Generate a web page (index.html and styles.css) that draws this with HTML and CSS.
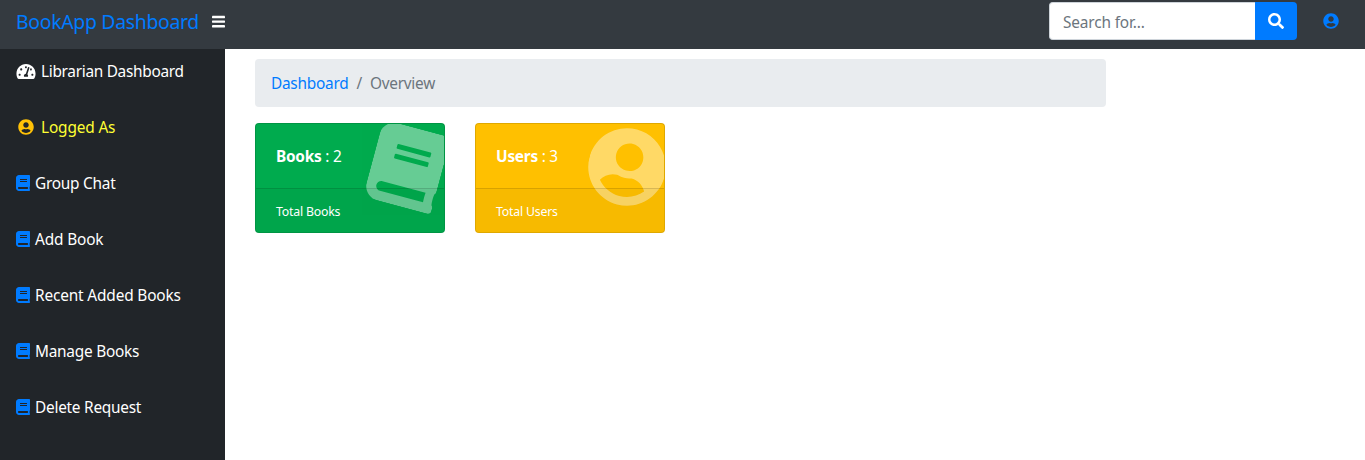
FILE: index.html
```html
<!DOCTYPE html>
<html lang="en">
<head>
<meta charset="utf-8">
<title>BookApp Dashboard</title>
<link rel="stylesheet" href="styles.css">
</head>
<body>
<svg class="sprite" aria-hidden="true">
  <symbol id="book" viewBox="0 0 448 512"><path d="M448 360V24c0-13.3-10.7-24-24-24H96C43 0 0 43 0 96v320c0 53 43 96 96 96h328c13.3 0 24-10.7 24-24v-16c0-7.5-3.5-14.3-8.9-18.7-4.2-15.4-4.2-59.3 0-74.7 5.4-4.3 8.9-11.1 8.9-18.6zM128 134c0-3.3 2.7-6 6-6h212c3.3 0 6 2.7 6 6v20c0 3.3-2.7 6-6 6H134c-3.3 0-6-2.7-6-6v-20zm0 64c0-3.3 2.7-6 6-6h212c3.3 0 6 2.7 6 6v20c0 3.3-2.7 6-6 6H134c-3.3 0-6-2.7-6-6v-20zm253.4 250H96c-17.7 0-32-14.3-32-32 0-17.6 14.4-32 32-32h285.4c-1.9 17.1-1.9 46.9 0 64z"/></symbol>
  <symbol id="user" viewBox="0 0 496 512"><path d="M248 8C111 8 0 119 0 256s111 248 248 248 248-111 248-248S385 8 248 8zm0 96c48.6 0 88 39.4 88 88s-39.4 88-88 88-88-39.4-88-88 39.4-88 88-88zm0 344c-58.7 0-111.3-26.6-146.5-68.2 18.8-35.4 55.6-59.8 98.5-59.8 2.4 0 4.8.4 7.1 1.1 13 4.2 26.6 6.9 40.9 6.9 14.3 0 28-2.7 40.9-6.9 2.3-.7 4.7-1.1 7.1-1.1 42.9 0 79.7 24.4 98.5 59.8C359.3 421.4 306.7 448 248 448z"/></symbol>
  <symbol id="search" viewBox="0 0 512 512"><path d="M505 442.7L405.3 343c-4.5-4.5-10.6-7-17-7H372c27.6-35.3 44-79.7 44-128C416 93.1 322.9 0 208 0S0 93.1 0 208s93.1 208 208 208c48.3 0 92.7-16.4 128-44v16.3c0 6.4 2.5 12.5 7 17l99.7 99.7c9.4 9.4 24.6 9.4 33.9 0l28.3-28.3c9.4-9.4 9.4-24.6.1-34zM208 336c-70.7 0-128-57.2-128-128 0-70.7 57.2-128 128-128 70.7 0 128 57.2 128 128 0 70.7-57.2 128-128 128z"/></symbol>
  <symbol id="gauge" viewBox="0 0 576 512"><path d="M288 32C128.94 32 0 160.94 0 320c0 52.8 14.25 102.26 39.06 144.8 5.61 9.62 16.3 15.2 27.44 15.2h443c11.14 0 21.83-5.58 27.44-15.2C561.75 422.26 576 372.8 576 320c0-159.06-128.94-288-288-288zm0 64c14.71 0 26.58 10.13 30.32 23.65-1.11 2.26-2.64 4.23-3.45 6.67l-9.22 27.67c-5.13 3.49-10.97 6.01-17.64 6.01-17.67 0-32-14.33-32-32S270.33 96 288 96zM96 384c-17.67 0-32-14.33-32-32s14.33-32 32-32 32 14.33 32 32-14.33 32-32 32zm48-160c-17.67 0-32-14.33-32-32s14.33-32 32-32 32 14.33 32 32-14.33 32-32 32zm246.77-72.41l-61.33 184C343.13 347.33 352 364.54 352 384c0 11.72-3.38 22.55-8.88 32H232.88c-5.5-9.45-8.88-20.28-8.88-32 0-33.94 26.5-61.43 59.9-63.59l61.34-184.01c4.17-12.56 17.73-19.45 30.36-15.17 12.57 4.19 19.35 17.79 15.17 30.36zm14.66 57.2l15.52-46.55c3.47-1.29 7.13-2.23 11.05-2.23 17.67 0 32 14.33 32 32s-14.33 32-32 32c-11.38-.01-20.89-6.28-26.57-15.22zM480 384c-17.67 0-32-14.33-32-32s14.33-32 32-32 32 14.33 32 32-14.33 32-32 32z"/></symbol>
  <symbol id="bars" viewBox="0 0 448 512"><rect x="0" y="60" width="448" height="80" rx="16"/><rect x="0" y="220" width="448" height="80" rx="16"/><rect x="0" y="380" width="448" height="80" rx="16"/></symbol>
</svg>
<header class="navbar">
  <a class="brand">BookApp Dashboard</a>
  <svg class="icon bars"><use href="#bars"/></svg>
  <form class="search">
    <input class="search-input" type="text" placeholder="Search for...">
    <button class="search-button" type="button" aria-label="Search"><svg class="icon"><use href="#search"/></svg></button>
  </form>
  <a class="account"><svg class="icon"><use href="#user"/></svg></a>
</header>
<div class="wrapper">
  <nav class="sidebar">
    <a class="link"><svg class="icon fixed gauge"><use href="#gauge"/></svg><span class="tight">Librarian Dashboard</span></a>
    <a class="link logged"><svg class="icon fixed"><use href="#user"/></svg><span class="loose">Logged As</span></a>
    <a class="link"><svg class="icon book"><use href="#book"/></svg><span>Group Chat</span></a>
    <a class="link"><svg class="icon book"><use href="#book"/></svg><span class="loose">Add Book</span></a>
    <a class="link"><svg class="icon book"><use href="#book"/></svg><span class="loose">Recent Added Books</span></a>
    <a class="link"><svg class="icon book"><use href="#book"/></svg><span>Manage Books</span></a>
    <a class="link"><svg class="icon book"><use href="#book"/></svg><span>Delete Request</span></a>
  </nav>
  <main class="content">
    <div class="breadcrumb"><a class="crumb-link">Dashboard</a><span class="slash">/</span><span>Overview</span></div>
    <div class="cards">
      <section class="card green">
        <svg class="card-icon card-book"><use href="#book"/></svg>
        <div class="card-body"><b>Books</b> : 2</div>
        <div class="card-footer">Total Books</div>
      </section>
      <section class="card yellow">
        <svg class="card-icon card-user"><use href="#user"/></svg>
        <div class="card-body"><b>Users</b> : 3</div>
        <div class="card-footer">Total Users</div>
      </section>
    </div>
  </main>
</div>
</body>
</html>
```
FILE: styles.css
```css
* { box-sizing: border-box; }
body {
  margin: 0;
  height: 460px;
  display: flex;
  flex-direction: column;
  overflow: hidden;
  background: #fff;
  font: 15.4px/24px "Segoe UI", "Noto Sans", sans-serif;
  letter-spacing: -0.25px;
}
.sprite { display: none; }
.icon { display: block; width: 16px; height: 16px; fill: currentColor; flex: none; }

.navbar { display: flex; align-items: center; height: 49px; flex: none; padding: 0 26px 7px 16px; background: #343a40; }
.brand { padding-top: 1px; color: #007bff; font-size: 19.4px; letter-spacing: -0.3px; white-space: nowrap; width: 196px; }
.bars { width: 13px; height: 15px; margin-top: 1px; color: #fff; }
.search { display: flex; margin-left: auto; height: 38px; }
.search-input {
  width: 206px;
  padding: 3px 12px 0 13px;
  border: 1px solid #ced4da;
  border-right: 0;
  border-radius: 4px 0 0 4px;
  background: #fff;
  font: inherit;
  letter-spacing: -0.15px;
}
.search-input::placeholder { color: #6c757d; opacity: 1; }
.search-button { display: flex; align-items: center; justify-content: center; width: 42px; padding: 0; border: 0; border-radius: 0 4px 4px 0; background: #007bff; color: #fff; }
.account { margin-left: 26px; color: #007bff; }

.wrapper { display: flex; flex: 1; min-height: 0; }
.sidebar { width: 225px; flex: none; background: #212529; overflow: hidden; }
.link { display: flex; align-items: center; height: 56px; padding: 0 16px 11px; color: #fff; white-space: nowrap; }
.tight { letter-spacing: -0.3px; }
.loose { letter-spacing: -0.15px; }
.fixed { width: 20px; margin-right: 5px; margin-bottom: 1px; }
.gauge { height: 17px; margin-bottom: 0; }
.book { width: 14px; margin-right: 5px; margin-bottom: 1px; color: #007bff; }
.logged { color: #ffff33; }
.logged .icon { color: #ffc107; }

.content { width: 881px; padding: 10px 0 0 30px; }
.breadcrumb { display: flex; gap: 8px; height: 48px; padding: 13px 16px 11px; border-radius: 4px; background: #e9ecef; color: #6c757d; }
.crumb-link { color: #007bff; }
.cards { display: flex; gap: 30px; margin-top: 16px; }
.card { position: relative; width: 190px; height: 110px; border: 1px solid rgba(0,0,0,.125); border-radius: 4px; overflow: hidden; color: #fff; }
.green { background: #00ab4e; }
.yellow { background: #ffc000; }
.card-body { position: relative; height: 64px; padding: 21px 20px 19px; }
.card-footer { position: relative; height: 44px; padding: 11px 20px; border-top: 1px solid rgba(0,0,0,.125); background: rgba(0,0,0,.03); font-size: 12.3px; letter-spacing: -0.2px; }
.card-icon { position: absolute; top: 3px; height: 80px; fill: #fff; opacity: .4; transform: rotate(15deg); }
.card-book { left: 116px; width: 70px; }
.card-user { left: 112px; width: 78px; }
```
